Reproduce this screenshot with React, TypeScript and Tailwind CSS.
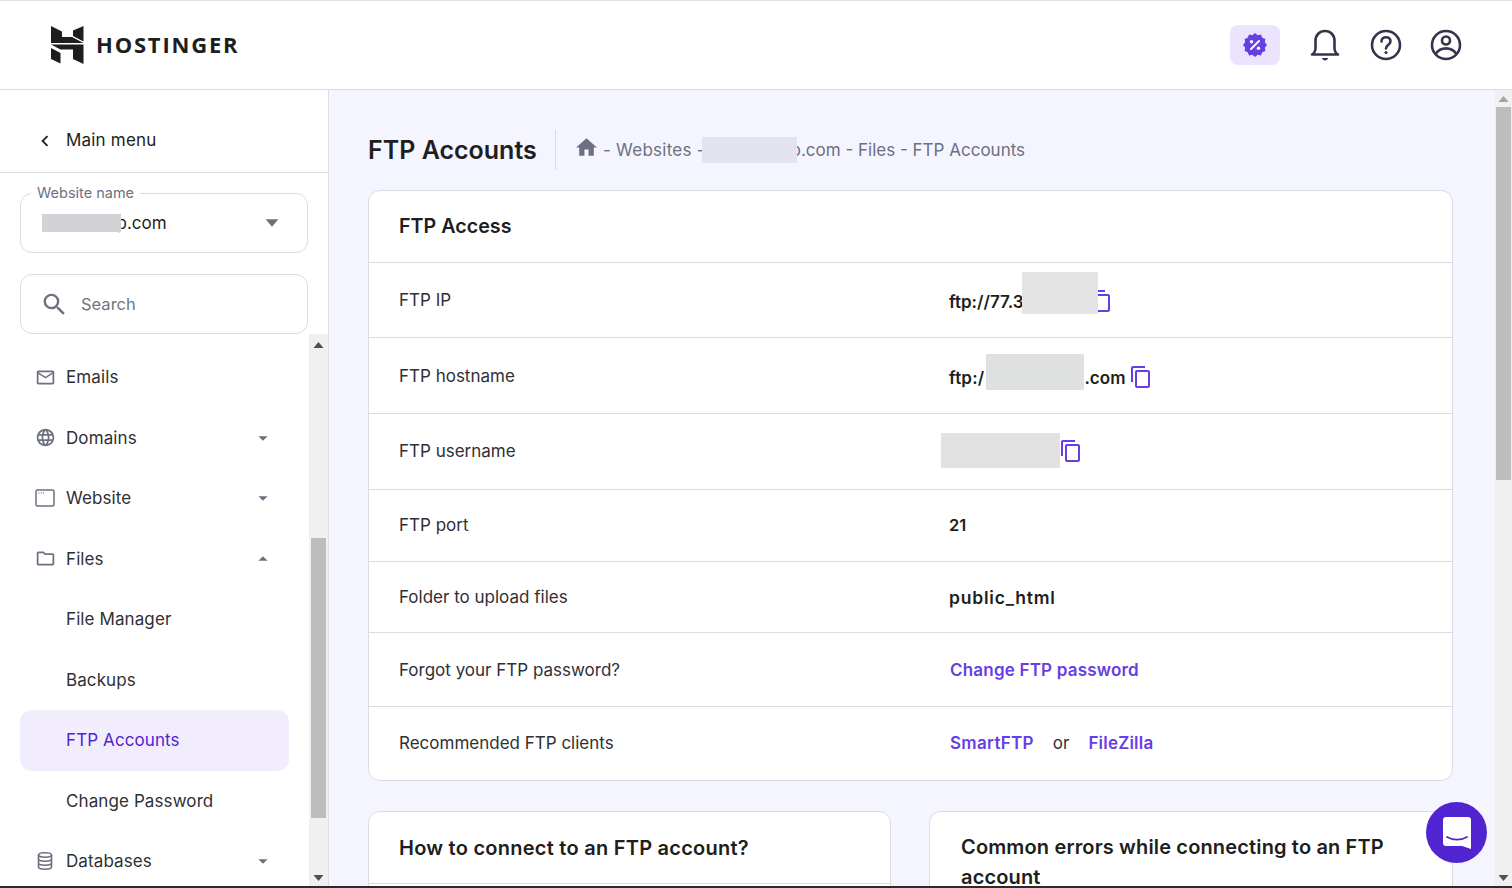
import React from "react";
import {
  MdArrowDropDown,
  MdArrowDropUp,
  MdChevronLeft,
  MdContentCopy,
  MdHome,
  MdLanguage,
  MdOutlineFolder,
  MdOutlineMailOutline,
  MdSearch,
} from "react-icons/md";

const burst = (() => {
  const pts: string[] = [];
  const n = 12;
  for (let i = 0; i < n * 2; i++) {
    const r = i % 2 === 0 ? 12 : 10.2;
    const a = (Math.PI * i) / n;
    pts.push(`${(12 + r * Math.sin(a)).toFixed(2)},${(12 - r * Math.cos(a)).toFixed(2)}`);
  }
  return pts.join(" ");
})();

function Logo() {
  return (
    <svg width="33" height="38" viewBox="51 26 33 38" fill="#1d1e20">
      <polygon points="51,26 62,31.5 62,37 72,37 83.5,43 51,43" />
      <polygon points="73,30.5 83.5,26 83.5,41.5 73,36" />
      <polygon points="51,48 60.5,53 60.5,63.5 51,59" />
      <polygon points="51,44.5 83.5,44.5 83.5,64 73,59 73,49.5 60.5,49.5" />
    </svg>
  );
}

function Nav({ label, icon, caret, active }: { label: string; icon?: React.ReactNode; caret?: "up" | "down"; active?: boolean }) {
  return (
    <div
      className={`flex h-[60.5px] w-[269px] shrink-0 items-center rounded-xl pl-[46px] pr-[15px] ${
        active ? "bg-[#f1edfd] text-[#5025d1]" : "text-[#2f3035]"
      }`}
    >
      {icon && <span className="-ml-[32px] mr-[10px] flex w-[22px] justify-center text-[#6d7081]">{icon}</span>}
      <span className="flex-1 pt-px text-[17px] tracking-[0.1px]">{label}</span>
      {caret === "down" && <MdArrowDropDown size={22} className="text-[#6d7081]" />}
      {caret === "up" && <MdArrowDropUp size={22} className="text-[#6d7081]" />}
    </div>
  );
}

function Row({ label, h, last, children }: { label: string; h: string; last?: boolean; children: React.ReactNode }) {
  return (
    <div className={`flex items-center ${h} ${last ? "" : "border-b border-[#dadce0]"}`}>
      <div className="w-[580px] pl-[30px] text-[17px] text-[#2f3035]">{label}</div>
      <div className="flex flex-1 items-center text-[17px] font-semibold text-[#1d1e20]">{children}</div>
    </div>
  );
}

function Copy({ className }: { className: string }) {
  return <MdContentCopy size={24} className={`shrink-0 text-[#673de6] ${className}`} />;
}

function Arrow({ up, color, big }: { up?: boolean; color: string; big?: boolean }) {
  return (
    <svg width={big ? 14 : 11} height={big ? 8 : 6} viewBox="0 0 11 6" fill={color}>
      <polygon points={up ? "5.5,0 10.5,6 0.5,6" : "0.5,0 10.5,0 5.5,6"} />
    </svg>
  );
}

export default function App() {
  return (
    <div className="flex h-[888px] w-[1512px] flex-col overflow-hidden bg-white font-['Inter',sans-serif] text-[#1d1e20]">
      <div className="h-px shrink-0 bg-[#e3e3e3]" />
      <header className="flex h-[89px] shrink-0 items-center border-b border-[#d8dae0] pl-[51px] pr-[50px]">
        <Logo />
        <span className="relative -top-px ml-[12px] font-['Open_Sans',sans-serif] text-[22px] font-bold tracking-[1.8px]">HOSTINGER</span>
        <div className="flex-1" />
        <div className="flex h-10 w-[50px] items-center justify-center rounded-lg bg-[#ebe4ff]">
          <svg width="24" height="24" viewBox="0 0 24 24">
            <polygon points={burst} fill="#673de6" />
            <line x1="8" y1="16" x2="16" y2="8" stroke="#fff" strokeWidth="2" strokeLinecap="round" />
            <circle cx="8.5" cy="8.8" r="1.7" fill="#fff" />
            <circle cx="15.5" cy="15.2" r="1.7" fill="#fff" />
          </svg>
        </div>
        <svg className="ml-[29px]" width="32" height="34" viewBox="0 0 32 34" fill="none" stroke="#36344d" strokeWidth="2.6">
          <path d="M3 26.5c2.5-1.5 3.5-3.5 3.5-6.5v-7c0-6 4-10 9.500-10s9.500 4 9.500 10v7c0 3 1 5 3.500 6.500z" strokeLinejoin="round" strokeLinecap="round" />
          <path d="M13 30h6c-.5 1.800-1.500 2.400-3 2.400s-2.500-.6-3-2.400z" fill="#36344d" stroke="none" />
        </svg>
        <svg className="ml-[29px]" width="32" height="32" viewBox="0 0 32 32" fill="none" stroke="#36344d" strokeWidth="2.6">
          <circle cx="16" cy="16" r="14" />
          <path d="M11.500 12.500c0-2.700 2-4.300 4.500-4.300s4.500 1.600 4.500 4c0 3.600-4.500 3.400-4.500 7.300" strokeLinecap="round" />
          <circle cx="16" cy="23.500" r="1.600" fill="#36344d" stroke="none" />
        </svg>
        <svg className="ml-[28px]" width="32" height="32" viewBox="0 0 32 32" fill="none" stroke="#36344d" strokeWidth="2.6">
          <circle cx="16" cy="16" r="14" />
          <circle cx="16" cy="11.500" r="4" />
          <path d="M5.500 25c2.500-3.600 6-5.600 10.500-5.600s8 2 10.500 5.600" />
        </svg>
      </header>

      <div className="flex min-h-0 flex-1">
        <aside className="flex w-[329px] shrink-0 flex-col border-r border-[#dcdde6] bg-white">
          <div className="flex h-[83px] shrink-0 items-center border-b border-[#dadce0] pl-[34px] pt-[20px] text-[17px] tracking-[0.2px] text-[#1d1e20]">
            <MdChevronLeft size={22} />
            <span className="ml-[10px]">Main menu</span>
          </div>
          <div className="relative mx-5 mt-5 flex h-[60px] w-[288px] shrink-0 items-center rounded-xl border border-[#dadce0] pl-[20px] pr-[28px] text-[17px] text-[#1d1e20]">
            <span className="absolute -top-[10px] left-[10px] bg-white px-[6px] text-[14.5px] leading-[18px] text-[#6d7081]">Website name</span>
            <span>s</span>
            <span className="relative z-10 -ml-[7.5px] h-[18px] w-[79px] bg-[#d3d3d7]" />
            <span className="-ml-[5px] pt-[2px]">p.com</span>
            <span className="flex-1" />
            <Arrow color="#6d7081" big />
          </div>
          <div className="mx-5 mt-[21px] flex h-[60px] w-[288px] shrink-0 items-center rounded-xl border border-[#dadce0] pl-[20px]">
            <MdSearch size={29} className="-ml-[1px] text-[#6d7081]" />
            <span className="ml-[12px] text-[16.5px] text-[#727586]">Search</span>
          </div>
          <div className="flex min-h-0 flex-1">
            <div className="flex flex-1 flex-col overflow-hidden pl-5 pt-[13px]">
              <Nav label="Emails" icon={<MdOutlineMailOutline size={21} />} />
              <Nav label="Domains" icon={<MdLanguage size={21} />} caret="down" />
              <Nav
                label="Website"
                icon={
                  <svg width="20" height="18" viewBox="0 0 20 18" fill="none" stroke="currentColor" strokeWidth="1.5">
                    <rect x="1" y="1" width="18" height="16" rx="1.500" />
                    <path d="M3.500 4h.8M5.800 4h.8M8.100 4h.8" />
                  </svg>
                }
                caret="down"
              />
              <Nav label="Files" icon={<MdOutlineFolder size={21} />} caret="up" />
              <Nav label="File Manager" />
              <Nav label="Backups" />
              <Nav label="FTP Accounts" active />
              <Nav label="Change Password" />
              <Nav
                label="Databases"
                icon={
                  <svg width="16" height="18" viewBox="0 0 16 18" fill="none" stroke="currentColor" strokeWidth="1.6">
                    <ellipse cx="8" cy="3" rx="6.500" ry="2.200" />
                    <path d="M1.500 3v12c0 1.200 2.900 2.200 6.500 2.200s6.500-1 6.500-2.200V3M1.500 7c0 1.200 2.900 2.200 6.500 2.200S14.500 8.200 14.500 7M1.500 11c0 1.200 2.900 2.200 6.500 2.200s6.500-1 6.500-2.200" />
                  </svg>
                }
                caret="down"
              />
            </div>
            <div className="flex w-[19px] shrink-0 flex-col items-center bg-[#f0f0f0]">
              <div className="flex h-[17px] shrink-0 items-center justify-center pt-1">
                <Arrow up color="#505050" />
              </div>
              <div className="h-[187px] shrink-0" />
              <div className="h-[280px] w-[15px] shrink-0 bg-[#bdbdbd]" />
              <div className="flex-1" />
              <div className="flex h-[17px] shrink-0 items-center justify-center">
                <Arrow color="#505050" />
              </div>
            </div>
          </div>
        </aside>

        <main className="relative flex min-w-0 flex-1 bg-[#f4f5ff]">
          <div className="min-w-0 flex-1 overflow-hidden pl-[39px] pr-[42px] pt-10">
            <div className="flex h-10 items-center">
              <h1 className="w-[187px] text-[25px] font-semibold leading-none text-[#1d1e20]">FTP Accounts</h1>
              <div className="h-10 w-px bg-[#dadce0]" />
              <MdHome size={25} className="relative -top-[3px] ml-[18px] text-[#6d7081]" />
              <span className="ml-[4px] -mr-[3px] pt-[2px] text-[17px] tracking-[0.25px] text-[#6d7081]">- Websites -</span>
              <span className="relative z-10 h-[26px] w-[95px] bg-[#e2e3ec]" />
              <span className="-ml-[6px] pt-[2px] text-[17px] text-[#6d7081]">o.com - Files - FTP Accounts</span>
            </div>

            <section className="mt-5 h-[591px] overflow-hidden rounded-xl border border-[#dadce0] bg-white">
              <div className="flex h-[72px] items-center border-b border-[#dadce0] pl-[30px] pt-[1px] text-[19.7px] font-semibold">FTP Access</div>
              <Row label="FTP IP" h="h-[75px] pt-[2px]">
                <span className="relative top-[2px]">ftp://77.3</span>
                <span className="relative -top-[8px] z-10 -ml-[2px] h-[42px] w-[76px] bg-[#e4e4e5]" />
                <Copy className="-ml-[9px]" />
              </Row>
              <Row label="FTP hostname" h="h-[76px] pt-[2px]">
                <span className="relative top-[2px] tracking-[0.2px]">ftp:/</span>
                <span className="relative -top-[5px] ml-[2px] h-9 w-[98px] bg-[#dfe0e0]" />
                <span className="relative top-[2px]">.com</span>
                <Copy className="ml-[4px]" />
              </Row>
              <Row label="FTP username" h="h-[76px]">
                <span className="relative -top-[1px] -ml-2 h-[35px] w-[119px] bg-[#e2e2e2]" />
                <Copy className="relative -top-[1px] -ml-[1px]" />
              </Row>
              <Row label="FTP port" h="h-[72px]">
                <span className="text-[16.5px]">21</span>
              </Row>
              <Row label="Folder to upload files" h="h-[71px] pt-[2px]">
                <span className="text-[17.5px] tracking-[0.8px]">public_html</span>
              </Row>
              <Row label="Forgot your FTP password?" h="h-[74px] pt-[2px]">
                <span className="ml-px tracking-[0.2px] text-[#673de6]">Change FTP password</span>
              </Row>
              <Row label="Recommended FTP clients" h="h-[73px]" last>
                <span className="ml-px tracking-[0.3px] text-[#673de6]">SmartFTP</span>
                <span className="ml-[19px] font-normal text-[#2f3035]">or</span>
                <span className="ml-[19px] tracking-[0.2px] text-[#673de6]">FileZilla</span>
              </Row>
            </section>

            <div className="mt-[30px] flex gap-[38px]">
              <section className="h-[200px] w-[523px] shrink-0 rounded-xl border border-[#dadce0] bg-white">
                <div className="flex h-[72px] items-center border-b border-[#dadce0] pl-[30px] text-[20px] font-semibold tracking-[0.25px]">How to connect to an FTP account?</div>
              </section>
              <section className="h-[200px] flex-1 rounded-xl border border-[#dadce0] bg-white px-[31px] pt-[20px] text-[20px] font-semibold leading-[30px] tracking-[0.15px]">
                Common errors while connecting to an FTP account
              </section>
            </div>
          </div>

          <div className="flex w-[17px] shrink-0 flex-col items-center bg-[#f0f0f0]">
            <div className="flex h-[17px] shrink-0 items-center justify-center">
              <Arrow up color="#a3a3a3" />
            </div>
            <div className="h-[373px] w-[15px] shrink-0 bg-[#bdbdbd]" />
            <div className="flex-1" />
            <div className="flex h-[17px] shrink-0 items-center justify-center">
              <Arrow color="#505050" />
            </div>
          </div>

          <div className="absolute left-[1097px] top-[712px] flex h-[61px] w-[61px] items-center justify-center rounded-full bg-[#5025d1]">
            <svg width="28" height="32" viewBox="0 0 28 32">
              <path d="M3 0h22a3 3 0 0 1 3 3v29l-9-3H3a3 3 0 0 1-3-3V3a3 3 0 0 1 3-3z" fill="#fff" />
              <path d="M4 20c6 3.500 14 3.500 20 0" fill="none" stroke="#5025d1" strokeWidth="1.800" strokeLinecap="round" />
            </svg>
          </div>
        </main>
      </div>
      <div className="h-[2px] shrink-0 bg-[#2b2b2b]" />
    </div>
  );
}
